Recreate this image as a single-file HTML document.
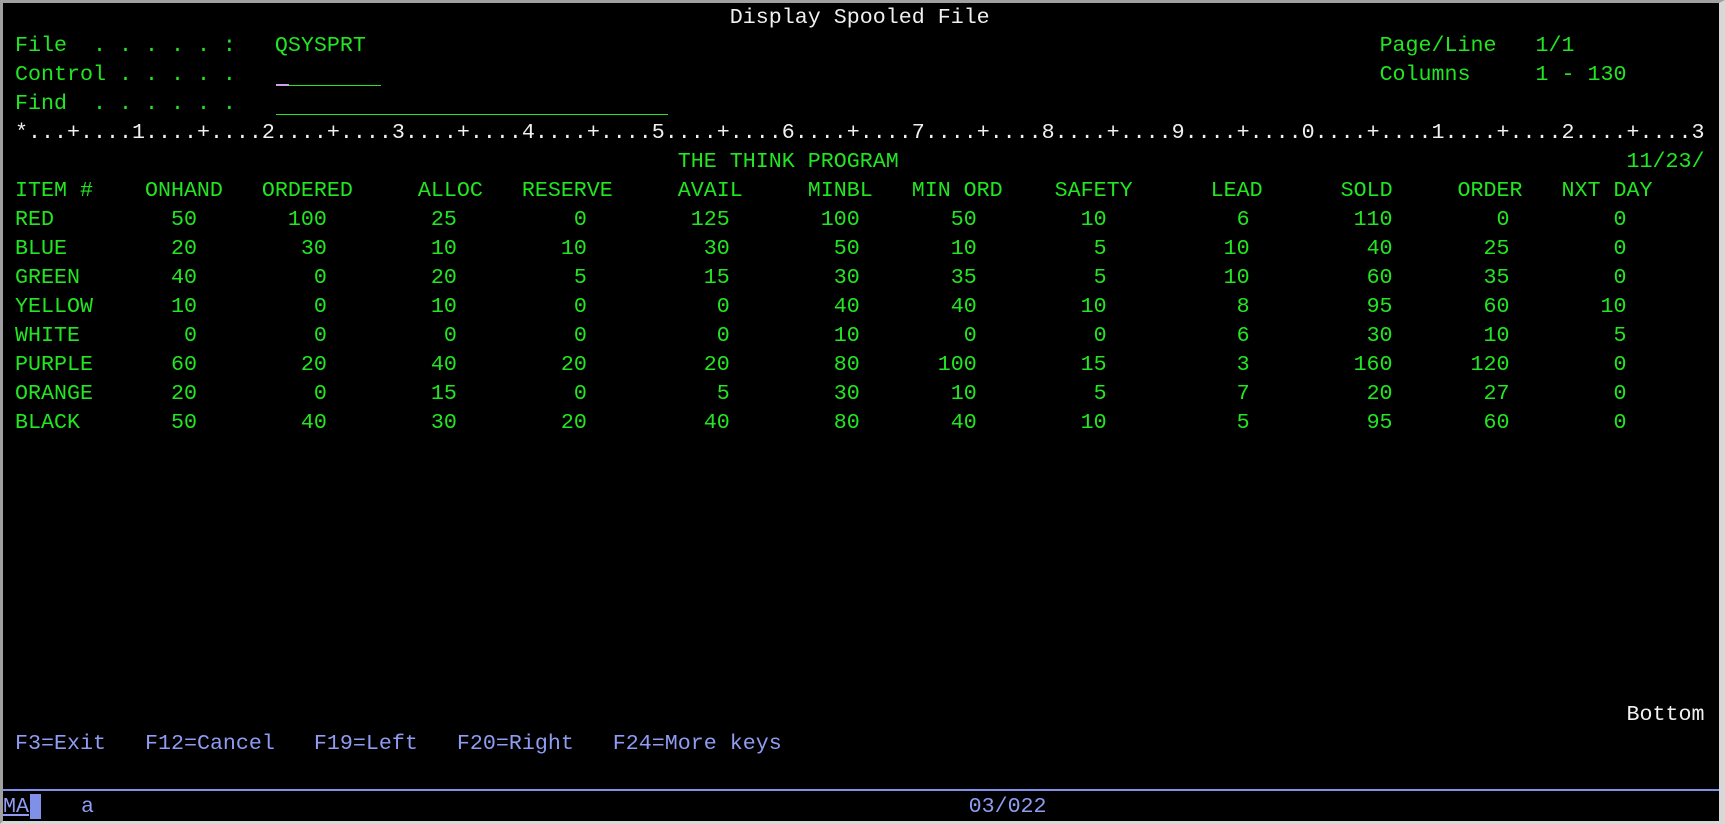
<!DOCTYPE html>
<html><head><meta charset="utf-8"><style>
html,body{margin:0;padding:0;background:#000;}
body{width:1725px;height:824px;position:relative;overflow:hidden;font-family:"Liberation Mono",monospace;font-size:21.66px;}
.frame{position:absolute;left:0;top:0;width:1725px;height:824px;box-sizing:border-box;border-left:3px solid #a0a0a0;border-top:3px solid #a0a0a0;border-right:6px solid #d8d8d8;border-bottom:3px solid #d8d8d8;}
.ln{position:absolute;left:15px;width:200ch;height:29px;line-height:29px;white-space:pre;color:#22e622;}
.ln span{position:absolute;top:0;}
.w{color:#f0f0f0;}
.b{color:#8f9cf2;}
.n1{right:186ch}.n2{right:176ch}.n3{right:166ch}.n4{right:156ch}.n5{right:145ch}.n6{right:135ch}
.n7{right:126ch}.n8{right:116ch}.n9{right:105ch}.n10{right:94ch}.n11{right:85ch}.n12{right:76ch}
</style></head><body>
<div class="frame"></div>
<div class="ln w" style="top:3px"><span style="left:55ch">Display Spooled File</span></div>
<div class="ln" style="top:31px"><span style="left:0">File  . . . . . :</span><span style="left:20ch">QSYSPRT</span><span style="left:105ch">Page/Line</span><span style="left:117ch">1/1</span></div>
<div class="ln" style="top:60px"><span style="left:0">Control . . . . .</span><span style="left:105ch">Columns</span><span style="left:117ch">1 - 130</span></div>
<div style="position:absolute;left:276px;top:85px;width:105px;height:1px;background:#22e622"></div>
<div style="position:absolute;left:276px;top:84px;width:13px;height:2px;background:#d0a0e0"></div>
<div class="ln" style="top:89px"><span style="left:0">Find  . . . . . .</span></div>
<div style="position:absolute;left:276px;top:114px;width:392px;height:1px;background:#22e622"></div>
<div class="ln w" style="top:118px"><span style="left:0">*...+....1....+....2....+....3....+....4....+....5....+....6....+....7....+....8....+....9....+....0....+....1....+....2....+....3</span></div>
<div class="ln" style="top:147px"><span style="left:51ch">THE THINK PROGRAM</span><span style="left:124ch">11/23/</span></div>
<div class="ln" style="top:176px"><span style="left:0">ITEM #</span><span style="left:10ch">ONHAND</span><span style="left:19ch">ORDERED</span><span style="left:31ch">ALLOC</span><span style="left:39ch">RESERVE</span><span style="left:51ch">AVAIL</span><span style="left:61ch">MINBL</span><span style="left:69ch">MIN ORD</span><span style="left:80ch">SAFETY</span><span style="left:92ch">LEAD</span><span style="left:102ch">SOLD</span><span style="left:111ch">ORDER</span><span style="left:119ch">NXT DAY</span></div>
<div class="ln" style="top:205px"><span style="left:0">RED</span><span class="n1">50</span><span class="n2">100</span><span class="n3">25</span><span class="n4">0</span><span class="n5">125</span><span class="n6">100</span><span class="n7">50</span><span class="n8">10</span><span class="n9">6</span><span class="n10">110</span><span class="n11">0</span><span class="n12">0</span></div>
<div class="ln" style="top:234px"><span style="left:0">BLUE</span><span class="n1">20</span><span class="n2">30</span><span class="n3">10</span><span class="n4">10</span><span class="n5">30</span><span class="n6">50</span><span class="n7">10</span><span class="n8">5</span><span class="n9">10</span><span class="n10">40</span><span class="n11">25</span><span class="n12">0</span></div>
<div class="ln" style="top:263px"><span style="left:0">GREEN</span><span class="n1">40</span><span class="n2">0</span><span class="n3">20</span><span class="n4">5</span><span class="n5">15</span><span class="n6">30</span><span class="n7">35</span><span class="n8">5</span><span class="n9">10</span><span class="n10">60</span><span class="n11">35</span><span class="n12">0</span></div>
<div class="ln" style="top:292px"><span style="left:0">YELLOW</span><span class="n1">10</span><span class="n2">0</span><span class="n3">10</span><span class="n4">0</span><span class="n5">0</span><span class="n6">40</span><span class="n7">40</span><span class="n8">10</span><span class="n9">8</span><span class="n10">95</span><span class="n11">60</span><span class="n12">10</span></div>
<div class="ln" style="top:321px"><span style="left:0">WHITE</span><span class="n1">0</span><span class="n2">0</span><span class="n3">0</span><span class="n4">0</span><span class="n5">0</span><span class="n6">10</span><span class="n7">0</span><span class="n8">0</span><span class="n9">6</span><span class="n10">30</span><span class="n11">10</span><span class="n12">5</span></div>
<div class="ln" style="top:350px"><span style="left:0">PURPLE</span><span class="n1">60</span><span class="n2">20</span><span class="n3">40</span><span class="n4">20</span><span class="n5">20</span><span class="n6">80</span><span class="n7">100</span><span class="n8">15</span><span class="n9">3</span><span class="n10">160</span><span class="n11">120</span><span class="n12">0</span></div>
<div class="ln" style="top:379px"><span style="left:0">ORANGE</span><span class="n1">20</span><span class="n2">0</span><span class="n3">15</span><span class="n4">0</span><span class="n5">5</span><span class="n6">30</span><span class="n7">10</span><span class="n8">5</span><span class="n9">7</span><span class="n10">20</span><span class="n11">27</span><span class="n12">0</span></div>
<div class="ln" style="top:408px"><span style="left:0">BLACK</span><span class="n1">50</span><span class="n2">40</span><span class="n3">30</span><span class="n4">20</span><span class="n5">40</span><span class="n6">80</span><span class="n7">40</span><span class="n8">10</span><span class="n9">5</span><span class="n10">95</span><span class="n11">60</span><span class="n12">0</span></div>
<div class="ln w" style="top:700px"><span style="left:124ch">Bottom</span></div>
<div class="ln b" style="top:729px"><span style="left:0">F3=Exit   F12=Cancel   F19=Left   F20=Right   F24=More keys</span></div>
<div style="position:absolute;left:3px;top:789px;width:1716px;height:2px;background:#8090e8"></div>
<div style="position:absolute;left:30px;top:794px;width:11px;height:25px;background:#8090e8"></div>
<div class="ln b" style="top:792px;left:3px"><span style="left:0;text-decoration:underline">MA</span><span style="left:6ch">a</span><span style="left:74.3ch">03/022</span></div>
</body></html>
